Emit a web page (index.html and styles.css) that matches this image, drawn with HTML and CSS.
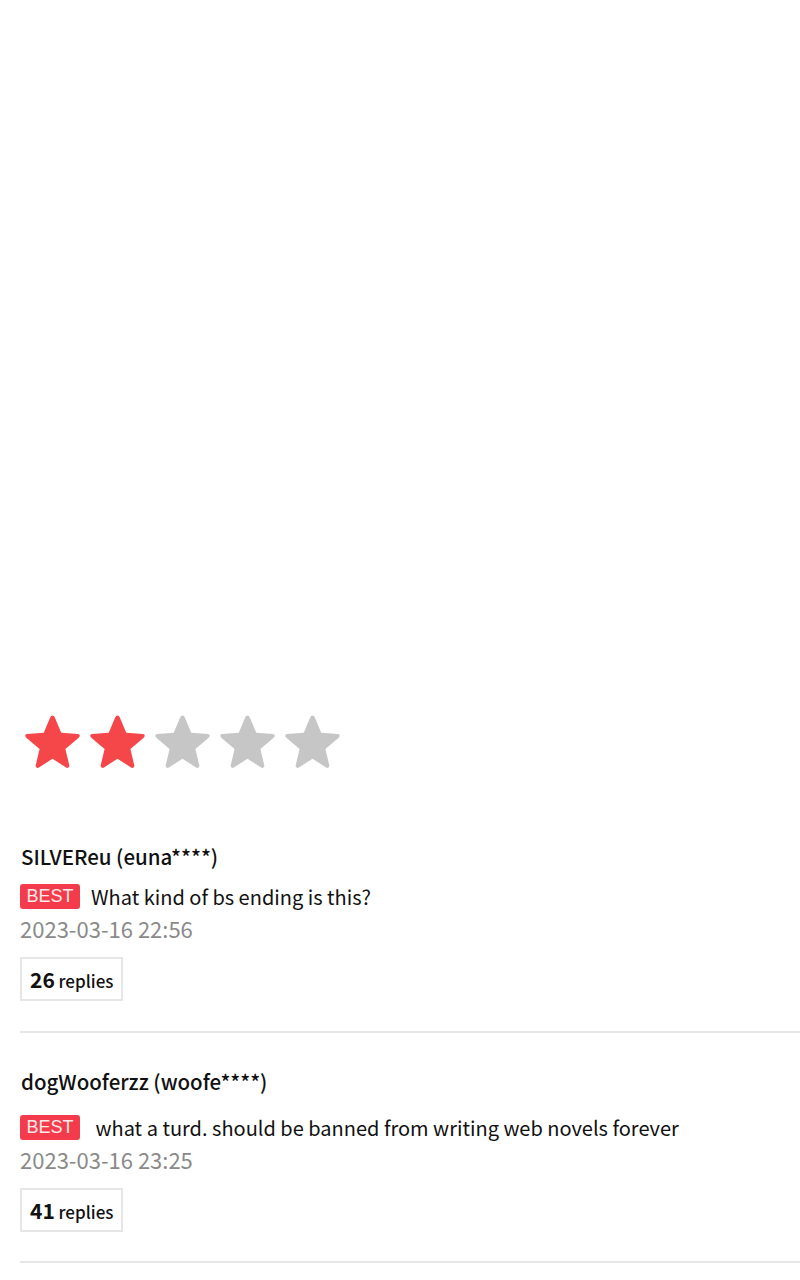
FILE: index.html
```html
<!DOCTYPE html>
<html>
<head>
<meta charset="utf-8">
<link rel="stylesheet" href="styles.css">
</head>
<body>
<div class="page">
  <div class="blank"></div>
  <div class="stars">
    <svg class="star on" viewBox="0 0 60 58"><path d="M30 2.5 Q31.5 2.5 32.3 4.3 L38.6 19.4 L55 20.7 Q57.5 21 56.5 23.3 Q56 24 55.2 24.7 L42.7 35.4 L46.5 51.4 Q47 54 44.6 54 Q43.8 54 43 53.4 L30 44.9 L17 53.4 Q16.2 54 15.4 54 Q13 54 13.5 51.4 L17.3 35.4 L4.8 24.7 Q4 24 3.5 23.3 Q2.5 21 5 20.7 L21.4 19.4 L27.7 4.3 Q28.5 2.5 30 2.5 Z"/></svg>
    <svg class="star on" viewBox="0 0 60 58"><path d="M30 2.5 Q31.5 2.5 32.3 4.3 L38.6 19.4 L55 20.7 Q57.5 21 56.5 23.3 Q56 24 55.2 24.7 L42.7 35.4 L46.5 51.4 Q47 54 44.6 54 Q43.8 54 43 53.4 L30 44.9 L17 53.4 Q16.2 54 15.4 54 Q13 54 13.5 51.4 L17.3 35.4 L4.8 24.7 Q4 24 3.5 23.3 Q2.5 21 5 20.7 L21.4 19.4 L27.7 4.3 Q28.5 2.5 30 2.5 Z"/></svg>
    <svg class="star" viewBox="0 0 60 58"><path d="M30 2.5 Q31.5 2.5 32.3 4.3 L38.6 19.4 L55 20.7 Q57.5 21 56.5 23.3 Q56 24 55.2 24.7 L42.7 35.4 L46.5 51.4 Q47 54 44.6 54 Q43.8 54 43 53.4 L30 44.9 L17 53.4 Q16.2 54 15.4 54 Q13 54 13.5 51.4 L17.3 35.4 L4.8 24.7 Q4 24 3.5 23.3 Q2.5 21 5 20.7 L21.4 19.4 L27.7 4.3 Q28.5 2.5 30 2.5 Z"/></svg>
    <svg class="star" viewBox="0 0 60 58"><path d="M30 2.5 Q31.5 2.5 32.3 4.3 L38.6 19.4 L55 20.7 Q57.5 21 56.5 23.3 Q56 24 55.2 24.7 L42.7 35.4 L46.5 51.4 Q47 54 44.6 54 Q43.8 54 43 53.4 L30 44.9 L17 53.4 Q16.2 54 15.4 54 Q13 54 13.5 51.4 L17.3 35.4 L4.8 24.7 Q4 24 3.5 23.3 Q2.5 21 5 20.7 L21.4 19.4 L27.7 4.3 Q28.5 2.5 30 2.5 Z"/></svg>
    <svg class="star" viewBox="0 0 60 58"><path d="M30 2.5 Q31.5 2.5 32.3 4.3 L38.6 19.4 L55 20.7 Q57.5 21 56.5 23.3 Q56 24 55.2 24.7 L42.7 35.4 L46.5 51.4 Q47 54 44.6 54 Q43.8 54 43 53.4 L30 44.9 L17 53.4 Q16.2 54 15.4 54 Q13 54 13.5 51.4 L17.3 35.4 L4.8 24.7 Q4 24 3.5 23.3 Q2.5 21 5 20.7 L21.4 19.4 L27.7 4.3 Q28.5 2.5 30 2.5 Z"/></svg>
  </div>

  <ul class="comments">
    <li class="comment first">
      <div class="name">SILVEReu (euna****)</div>
      <div class="body"><span class="best">BEST</span><span class="text">What kind of bs ending is this?</span></div>
      <div class="date">2023-03-16 22:56</div>
      <div class="replies"><b>26</b> replies</div>
    </li>
    <li class="comment second">
      <div class="name">dogWooferzz (woofe****)</div>
      <div class="body"><span class="best">BEST</span><span class="text">&nbsp;what a turd. should be banned from writing web novels forever</span></div>
      <div class="date">2023-03-16 23:25</div>
      <div class="replies"><b>41</b> replies</div>
    </li>
  </ul>
</div>
</body>
</html>
```
FILE: styles.css
```css
html, body {
  margin: 0;
  padding: 0;
  background: #fff;
}
body {
  font-family: "Noto Sans CJK KR", "Noto Sans", sans-serif;
  color: #111;
}
.page {
  width: 800px;
  height: 1280px;
  overflow: hidden;
}
.blank {
  height: 713px;
}
.stars {
  display: flex;
  gap: 4px;
  padding-left: 22px;
  height: 60px;
}
.star {
  width: 61px;
  height: 59px;
  fill: #c6c6c6;
}
.star.on {
  fill: #f5474a;
}
.comments {
  list-style: none;
  margin: 0;
  padding: 0 0 0 20px;
}
.comment {
  border-bottom: 2px solid #e6e6e6;
}
.comment.first {
  margin-top: 68px;
  padding-bottom: 30px;
}
.comment.second {
  padding-top: 33px;
  padding-bottom: 29px;
}
.name {
  font-size: 20.5px;
  font-weight: 500;
  line-height: 30px;
  padding-left: 1px;
  color: #111;
}
.body {
  display: flex;
  align-items: center;
  margin-top: 12px;
  height: 26px;
}
.second .body {
  margin-top: 18px;
}
.best {
  display: inline-block;
  background: #f33b4b;
  color: #ffe9ea;
  font-family: "Liberation Sans", Arial, sans-serif;
  font-size: 18px;
  line-height: 25px;
  height: 25px;
  width: 60px;
  text-align: center;
  border-radius: 3px;
}
.text {
  margin-left: 11px;
  font-size: 20px;
  color: #111;
}
.date {
  margin-top: 5px;
  font-size: 22px;
  line-height: 28px;
  color: #8a8a8a;
}
.replies {
  display: inline-block;
  margin-top: 15px;
  border: 2px solid #e6e6e6;
  padding: 0 8px;
  height: 40px;
  line-height: 40px;
  font-size: 17px;
  font-weight: 500;
  color: #111;
}
.replies b {
  font-size: 21px;
  font-weight: 700;
}
```
